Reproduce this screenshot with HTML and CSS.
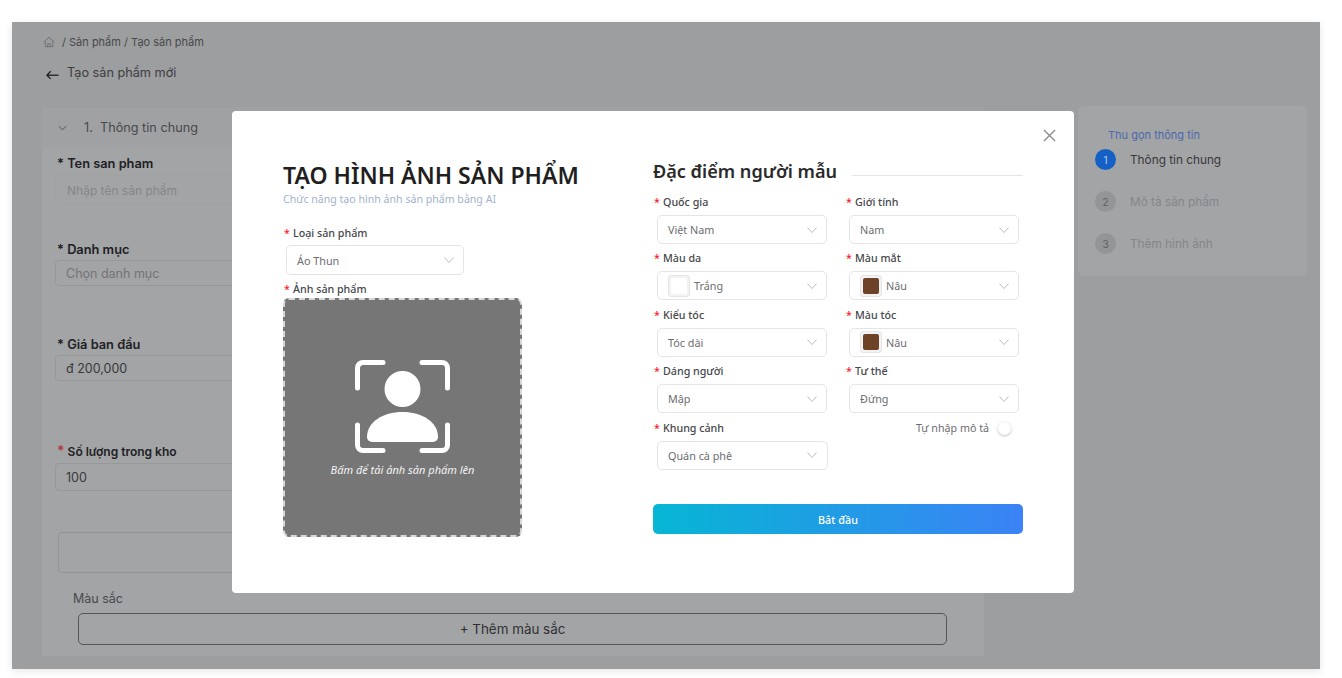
FILE: index.html
```html
<!DOCTYPE html>
<html>
  <head>
    <meta charset="utf-8" />
    <title>Tạo sản phẩm mới</title>
    <meta name="viewport" content="width=device-width, initial-scale=1" />
    <link rel="stylesheet" href="styles.css">
  </head>

  <body>
    <div class="frame">
      <div class="crumbs">
        <svg class="home-icon" viewBox="0 0 14 14" fill="none" stroke="#67686a" stroke-width="0.9" stroke-linejoin="round">
          <path d="M1 7 7 1.500 13 7" />
          <path d="M2.600 6v6.500h8.800V6" />
          <path d="M5.500 12.500V9h3v3.500" />
        </svg>
        <span>/ Sản phẩm / Tạo sản phẩm</span>
      </div>
      <div class="page-title">
        <svg class="back-icon" viewBox="0 0 14 10" fill="none" stroke="#1d1e20" stroke-width="1.400">
          <path d="M13.500 5.200H1.200" />
          <path d="M5 1 1 5.200 5 9.200" />
        </svg>
        <span>Tạo sản phẩm mới</span>
      </div>

      <div class="content">
        <div class="panel">
          <div class="panel-head">
            <svg class="head-chevron" viewBox="0 0 10 6" fill="none" stroke="#4a4b4d" stroke-width="1">
              <path d="M1 1 5 5 9 1" />
            </svg>
            <span>1.&nbsp; Thông tin chung</span>
          </div>

          <label class="bg-label name-label">* Ten san pham</label>
          <div class="bg-input name-input">Nhập tên sản phẩm</div>

          <label class="bg-label cat-label">* Danh mục</label>
          <div class="bg-input cat-input">Chọn danh mục</div>

          <label class="bg-label price-label">* Giá ban đầu</label>
          <div class="bg-input price-input">đ 200,000</div>

          <label class="bg-label stock-label"><em>*</em> Số lượng trong kho</label>
          <div class="bg-input stock-input">100</div>

          <div class="empty-box"></div>
          <div class="color-label">Màu sắc</div>
          <button class="add-color" type="button">+ Thêm màu sắc</button>
        </div>

        <div class="steps">
          <a class="collapse-link">Thu gọn thông tin</a>
          <div class="step active"><span class="step-num">1</span><span>Thông tin chung</span></div>
          <div class="step"><span class="step-num">2</span><span>Mô tả sản phẩm</span></div>
          <div class="step"><span class="step-num">3</span><span>Thêm hình ảnh</span></div>
        </div>
      </div>

      <div class="modal">
        <svg class="close-icon" viewBox="0 0 14 14" fill="none" stroke="#8a8a8a" stroke-width="1.400">
          <path d="M1 1 13 13M13 1 1 13" />
        </svg>

        <div class="modal-left">
          <h1>TẠO HÌNH ẢNH SẢN PHẨM</h1>
          <p class="subtitle">Chức năng tạo hình ảnh sản phẩm bằng AI</p>

          <div class="label type-label"><em>*</em>Loại sản phẩm</div>
          <div class="select type-select">
            <span>Áo Thun</span>
            <svg class="chevron" viewBox="0 0 10 6"><path d="M.5.5 5 5.500 9.500.5" /></svg>
          </div>

          <div class="label photo-label"><em>*</em>Ảnh sản phẩm</div>
          <div class="dropzone">
            <svg class="upload-icon" viewBox="0 0 95 94">
              <g fill="none" stroke="#fff" stroke-width="5" stroke-linecap="round">
                <path d="M2.500 28V8a5.500 5.500 0 0 1 5.500-5.500H28" />
                <path d="M67 2.500h20a5.500 5.500 0 0 1 5.500 5.500v20" />
                <path d="M2.500 65v20a5.500 5.500 0 0 0 5.500 5.500h20" />
                <path d="M67 90.500h20a5.500 5.500 0 0 0 5.500-5.500V65" />
              </g>
              <circle cx="47.500" cy="29" r="18" fill="#fff" />
              <path d="M17 82a5 5 0 0 1-5-5C12 62 28 52 47.500 52S83 62 83 77a5 5 0 0 1-5 5Z" fill="#fff" />
            </svg>
            <div class="drop-text">Bấm để tải ảnh sản phẩm lên</div>
          </div>
        </div>

        <div class="modal-right">
          <div class="section-title">
            <h2>Đặc điểm người mẫu</h2>
            <span class="section-line"></span>
          </div>

          <div class="fields">
            <div class="field">
              <div class="label"><em>*</em>Quốc gia</div>
              <div class="select"><span>Việt Nam</span><svg class="chevron" viewBox="0 0 10 6"><path d="M.5.5 5 5.500 9.500.5" /></svg></div>
            </div>
            <div class="field">
              <div class="label"><em>*</em>Giới tính</div>
              <div class="select"><span>Nam</span><svg class="chevron" viewBox="0 0 10 6"><path d="M.5.5 5 5.500 9.500.5" /></svg></div>
            </div>
            <div class="field">
              <div class="label"><em>*</em>Màu da</div>
              <div class="select swatch-select"><i class="swatch white"><b></b></i><span>Trắng</span><svg class="chevron" viewBox="0 0 10 6"><path d="M.5.5 5 5.500 9.500.5" /></svg></div>
            </div>
            <div class="field">
              <div class="label"><em>*</em>Màu mắt</div>
              <div class="select swatch-select"><i class="swatch brown"><b></b></i><span>Nâu</span><svg class="chevron" viewBox="0 0 10 6"><path d="M.5.5 5 5.500 9.500.5" /></svg></div>
            </div>
            <div class="field">
              <div class="label"><em>*</em>Kiểu tóc</div>
              <div class="select"><span>Tóc dài</span><svg class="chevron" viewBox="0 0 10 6"><path d="M.5.5 5 5.500 9.500.5" /></svg></div>
            </div>
            <div class="field">
              <div class="label"><em>*</em>Màu tóc</div>
              <div class="select swatch-select"><i class="swatch brown"><b></b></i><span>Nâu</span><svg class="chevron" viewBox="0 0 10 6"><path d="M.5.5 5 5.500 9.500.5" /></svg></div>
            </div>
            <div class="field">
              <div class="label"><em>*</em>Dáng người</div>
              <div class="select"><span>Mập</span><svg class="chevron" viewBox="0 0 10 6"><path d="M.5.5 5 5.500 9.500.5" /></svg></div>
            </div>
            <div class="field">
              <div class="label"><em>*</em>Tư thế</div>
              <div class="select"><span>Đứng</span><svg class="chevron" viewBox="0 0 10 6"><path d="M.5.5 5 5.500 9.500.5" /></svg></div>
            </div>
            <div class="field">
              <div class="label"><em>*</em>Khung cảnh</div>
              <div class="select scene-select"><span>Quán cà phê</span><svg class="chevron" viewBox="0 0 10 6"><path d="M.5.5 5 5.500 9.500.5" /></svg></div>
            </div>
            <div class="field toggle-field">
              <span>Tự nhập mô tả</span>
              <span class="toggle"></span>
            </div>
          </div>

          <button class="start-btn" type="button">Bắt đầu</button>
        </div>
      </div>
    </div>
  </body>
</html>
```

FILE: styles.css
```css
* {
  margin: 0;
  padding: 0;
  box-sizing: border-box;
}

body {
  font-family: "Inter", "Noto Sans", sans-serif;
  background-color: #fff;
  padding: 22px 22px 9px 12px;
  height: 678px;
  overflow: hidden;
}

.frame {
  position: relative;
  height: 647px;
  background-color: #9d9ea0;
  box-shadow: 0 2px 8px rgba(0, 0, 0, 0.1);
  overflow: hidden;
}

/* page behind the dialog */
.crumbs {
  display: flex;
  align-items: center;
  gap: 7px;
  padding: 12px 0 0 31px;
  height: 27px;
  font-size: 11px;
  color: #48494b;
}

.home-icon {
  width: 12px;
  height: 12px;
}

.page-title {
  display: flex;
  align-items: center;
  gap: 8px;
  margin: 13px 0 0 34px;
  height: 20px;
  font-size: 12.700px;
  color: #3c3d3f;
}

.back-icon {
  width: 13px;
  height: 10px;
  margin-top: 5px;
}

.content {
  display: flex;
  align-items: flex-start;
  gap: 94px;
  margin: 25px 0 0 30px;
}

.panel {
  width: 942px;
  height: 549px;
  background-color: #a3a4a6;
  padding-left: 13px;
}

.panel-head {
  display: flex;
  align-items: center;
  gap: 17px;
  height: 41px;
  margin-left: -13px;
  padding-left: 16px;
  font-size: 12.700px;
  color: #48494b;
  background-color: #a0a1a3;
}

.head-chevron {
  width: 9px;
  height: 6px;
}

.bg-label {
  display: block;
  font-size: 12.800px;
  font-weight: 600;
  line-height: 16px;
  color: #202124;
  margin-left: 2px;
}

.bg-label em {
  color: #b23a3c;
  font-style: normal;
  font-size: 14px;
  line-height: 14px;
}

.name-label { margin-top: 8px; }
.cat-label { margin-top: 36px; }
.price-label { margin-top: 51px; }

.stock-label {
  margin-top: 63px;
  font-size: 12px;
}

.bg-input {
  display: flex;
  align-items: center;
  width: 920px;
  height: 26px;
  padding-left: 10px;
  margin-top: 2px;
  border: 1px solid #97989a;
  border-radius: 4px;
  font-size: 12.500px;
  color: #38393b;
}

.name-input {
  height: 31px;
  margin-top: 3px;
  padding-left: 11px;
  border-color: #a0a1a3;
  color: #85868a;
  font-size: 12px;
}

.cat-input { color: #737477; }

.stock-input {
  height: 28px;
  margin-top: 3px;
}

.empty-box {
  width: 900px;
  height: 41px;
  margin: 41px 0 0 3px;
  border: 1px solid #949597;
  border-radius: 4px;
}

.color-label {
  margin: 18px 0 0 18px;
  font-size: 12.500px;
  line-height: 16px;
  color: #48494b;
}

.add-color {
  display: block;
  width: 869px;
  height: 32px;
  margin: 6px 0 0 23px;
  background: transparent;
  border: 1px solid #55565a;
  border-radius: 5px;
  font-family: inherit;
  font-size: 13.400px;
  color: #2f3032;
}

.steps {
  width: 229px;
  height: 170px;
  margin-top: -1px;
  padding: 22px 0 0 17px;
  background-color: #a3a4a6;
  border-radius: 6px;
}

.collapse-link {
  display: block;
  margin-left: 13px;
  font-size: 11px;
  line-height: 15px;
  color: #4b69ad;
}

.step {
  display: flex;
  align-items: center;
  gap: 14px;
  height: 21px;
  margin-bottom: 21px;
  font-size: 11.800px;
  color: #85868a;
}

.collapse-link + .step {
  margin-top: 6px;
}

.step-num {
  display: flex;
  align-items: center;
  justify-content: center;
  width: 21px;
  height: 21px;
  border-radius: 50%;
  background-color: #949597;
  font-size: 10px;
  color: #5f6063;
}

.step.active {
  color: #37383a;
}

.step.active .step-num {
  background-color: #1560c4;
  color: #b9cdea;
}

/* dialog */
.modal {
  position: absolute;
  left: 220px;
  top: 89px;
  display: flex;
  gap: 131px;
  width: 842px;
  height: 482px;
  padding: 49px 51px 0;
  background-color: #fff;
  border-radius: 4px;
  font-family: "Noto Sans", "Inter", sans-serif;
}

.close-icon {
  position: absolute;
  top: 18px;
  right: 18px;
  width: 13px;
  height: 13px;
}

.modal-left {
  width: 239px;
  flex-shrink: 0;
}

h1 {
  font-size: 23px;
  font-weight: 600;
  line-height: 30px;
  color: #1f1f1f;
  white-space: nowrap;
}

.subtitle {
  margin-top: 2px;
  font-size: 10.600px;
  line-height: 15px;
  color: #a3b2cc;
  white-space: nowrap;
}

.label {
  font-size: 10.700px;
  font-weight: 500;
  line-height: 17px;
  color: #45464a;
  white-space: nowrap;
}

.label em {
  display: inline-block;
  width: 10px;
  padding-left: 1px;
  font-style: normal;
  color: #f5222d;
}

.type-label {
  margin-top: 18px;
}

.photo-label {
  margin-top: 6px;
}

.select {
  display: flex;
  align-items: center;
  justify-content: space-between;
  width: 170px;
  height: 29px;
  margin: 4px 0 0 4px;
  padding: 0 9px 0 10px;
  border: 1px solid #e3e4e6;
  border-radius: 5px;
  font-size: 10.800px;
  color: #6c6d70;
}

.type-select {
  width: 178px;
  height: 30px;
  margin: 3px 0 0 3px;
}

.scene-select {
  width: 171px;
  padding-right: 10px;
}

.chevron {
  width: 10px;
  height: 6px;
  fill: none;
  stroke: #b4b5b8;
  stroke-width: 0.9;
}

.swatch-select {
  justify-content: flex-start;
  gap: 4px;
}

.swatch-select .chevron {
  margin-left: auto;
}

.swatch {
  display: flex;
  align-items: center;
  justify-content: center;
  width: 22px;
  height: 22px;
  border: 1px solid #e6e6e6;
  border-radius: 3px;
  background-color: #f3f3f3;
}

.swatch b {
  display: block;
  width: 16px;
  height: 16px;
  border-radius: 2px;
}

.swatch.white b {
  background-color: #fff;
}

.swatch.brown b {
  background-color: #6e4226;
}

.dropzone {
  display: flex;
  flex-direction: column;
  align-items: center;
  width: 239px;
  height: 239px;
  padding-top: 60px;
  background-color: #767676;
  border: 2px dashed #d8d8d8;
  border-radius: 6px;
}

.upload-icon {
  width: 95px;
  height: 94px;
  flex-shrink: 0;
}

.drop-text {
  margin-top: 8px;
  font-size: 11px;
  font-style: italic;
  line-height: 15px;
  color: #f4f4f4;
}

.modal-right {
  width: 370px;
  flex-shrink: 0;
  margin-top: -1px;
}

.section-title {
  display: flex;
  align-items: center;
  gap: 15px;
  height: 24px;
}

h2 {
  font-size: 18.100px;
  font-weight: 600;
  color: #2a2a2a;
  white-space: nowrap;
}

.section-line {
  flex: 1;
  height: 1px;
  margin-top: 9px;
  background-color: #e2e4ee;
}

.fields {
  display: grid;
  grid-template-columns: 177px 177px;
  column-gap: 15px;
  row-gap: 6.400px;
  margin-top: 11px;
}

.field {
  height: 50px;
}

.toggle-field {
  display: flex;
  align-items: flex-start;
  justify-content: flex-end;
  gap: 9px;
  padding: 1px 11px 0 0;
  font-size: 10.700px;
  line-height: 15px;
  color: #6c6d70;
}

.toggle {
  width: 13px;
  height: 13px;
  margin-top: 1px;
  border-radius: 50%;
  background-color: #fff;
  box-shadow: 0 1px 3px rgba(0, 0, 0, 0.25);
}

.start-btn {
  display: block;
  width: 100%;
  height: 30px;
  margin-top: 34px;
  padding-top: 1px;
  border: none;
  border-radius: 5px;
  background: linear-gradient(90deg, #06b6d4, #3b82f6);
  font-family: inherit;
  font-size: 10.800px;
  font-weight: 500;
  color: #fff;
}
```
